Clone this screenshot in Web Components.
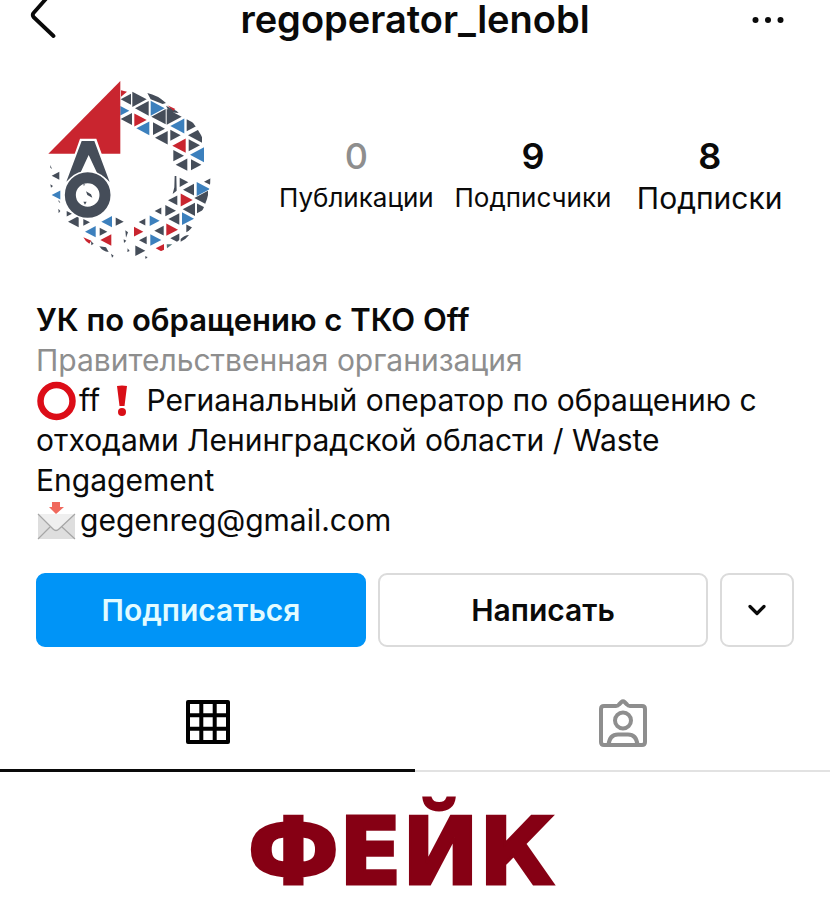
<!DOCTYPE html>
<html lang="ru">
<head>
<meta charset="utf-8">
<meta name="viewport" content="width=device-width, initial-scale=1">
<title>regoperator_lenobl</title>
<style>
  body { margin: 0; background: #fff; color: #0a0a0a; font-family: Inter, "Liberation Sans", sans-serif; }
</style>
</head>
<body>
<profile-page></profile-page>

<script>
const define = (name, html, setup) => {
  const template = document.createElement('template');
  template.innerHTML = html;
  customElements.define(name, class extends HTMLElement {
    constructor() {
      super();
      this.attachShadow({ mode: 'open' }).append(template.content.cloneNode(true));
    }
    connectedCallback() { if (setup) setup(this, this.shadowRoot); }
  });
};

define('profile-header', `
<style>
  :host { display: grid; grid-template-columns: 60px 1fr 60px; align-items: center; height: 40px; padding: 0 30px; }
  h1 { margin: 0; font-size: 38px; line-height: 38px; font-weight: 600; text-align: center; white-space: nowrap; align-self: start; }
  button { display: flex; height: 40px; padding: 0; border: 0; background: none; color: inherit; }
  .more { justify-content: flex-end; }
</style>
<button aria-label="Назад"><svg width="28" height="40" viewBox="0 0 28 40" fill="none" stroke="currentColor" stroke-width="3.8" stroke-linecap="round" stroke-linejoin="round"><path d="M22-8 3.500 13Q2 15 3.500 17L23.500 36"/></svg></button>
<h1><slot></slot></h1>
<button class="more" aria-label="Ещё"><svg width="48" height="40" viewBox="0 0 48 40" fill="currentColor"><circle cx="3.500" cy="20" r="3"/><circle cx="16" cy="20" r="3"/><circle cx="28.500" cy="20" r="3"/></svg></button>
`);

// Mosaic pieces: x of the left side, x of the right side, y, direction, colour key
const MOSAIC = [
  [274,302,103,'l','d'],[308,348,103,'r','d'],[272,296,137,'r','b'],[317,355,130,'l','d'],[363,402,130,'r','b'],
  [274,305,162,'l','d'],[314,348,165,'r','r'],[321,357,190,'l','b'],[370,403,191,'r','d'],[366,406,155,'l','d'],
  [411,453,155,'r','d'],[377,412,218,'l','d'],[422,450,211,'r','d'],[423,462,183,'l','b'],[471,502,181,'r','d'],
  [476,515,211,'l','d'],[429,466,242,'l','r'],[477,508,241,'r','d'],[482,521,269,'l','b'],[431,460,272,'r','d'],
  [439,471,299,'l','d'],[484,512,299,'r','d'],[450,473,352,'r','d'],[461,491,374,'l','d'],[501,538,372,'r','b'],
  [524,541,350,'l','d'],[416,441,406,'l','d'],[453,486,405,'r','r'],[495,533,399,'l','d'],[407,436,437,'r','d'],
  [460,494,433,'l','d'],[502,527,430,'r','d'],[376,393,438,'l','d'],[417,447,462,'l','d'],[457,490,461,'r','b'],
  [360,387,467,'r','b'],[328,345,471,'l','d'],[375,400,497,'l','d'],[410,442,494,'r','r'],[329,349,526,'l','d'],
  [313,338,500,'r','r'],[362,392,525,'r','b'],[423,447,520,'l','d'],[470,489,490,'r','d'],[317,344,557,'r','d'],
  [379,401,550,'l','r'],[116,145,470,'l','d'],[161,178,472,'r','d'],[216,245,470,'l','b'],[258,279,470,'r','d'],
  [167,196,500,'l','b'],[210,230,500,'r','d'],[213,243,525,'l','r'],[67,87,332,'l','d'],[67,90,390,'l','b'],
  [111,124,446,'r','d']
];
define('profile-avatar', `
<style>
  :host { display: block; }
  svg { display: block; }
  .d { fill: #454d59; } .b { fill: #3c80bd; } .r { fill: #c9252f; }
</style>
<svg width="200" height="210" viewBox="0 0 600 630" role="img" aria-label="Логотип">
  <clipPath id="rim"><circle cx="289" cy="328" r="253"/></clipPath>
  <g id="mosaic" clip-path="url(#rim)"></g>
  <path class="d" d="M352 84Q382 90 408 114L398 117 362 103ZM408 122 440 138 446 144 418 142ZM434 333l5 0 1 44-12 10 5-20ZM452 522q12-12 25-12-8 12-25 20ZM286 496l8 6-6 16ZM281 523l8 4-7 7ZM293 550l6 8-7 3ZM243 566l8 6-5 6ZM345 574l8 2-6 6ZM61 300l5 12-5-4ZM61 358l8 5-6 5ZM86 404l5 10-5-3ZM85 431l6 7-5 7ZM183 528l8 8-7 5ZM208 544l20 3 8 14q-18-1-28-17Z"/>
  <path class="r" d="M273 76 291 80 273 95ZM412 121 436 132 430 137ZM160 517 184 527 178 536Q166 530 160 517Z"/>
  <path d="M410 538l17 0-16 12Z" fill="#55777c"/>
  <path class="r" d="M271 48V266H55Z"/>
  <path d="M150 221H199L247 357 205 365 175 275 145 350 102 358Z" fill="#fff"/>
  <path class="d" d="M155 228H193L239 351Q218 330 203 328L176 270 150 326Q128 330 109 350Z"/>
  <circle cx="173" cy="390" r="73" fill="#fff"/>
  <circle cx="173" cy="390" r="52" fill="none" stroke="#454d59" stroke-width="33"/>
  <path class="d" d="M168 379l15 9 4 10-15-8ZM160 410l10 0-5 9ZM160 357l6 2-5 3Z"/>
</svg>
`, (host, root) => {
  const group = root.getElementById('mosaic');
  if (group.childElementCount) return;
  for (const [x1, x2, y, dir, tone] of MOSAIC) {
    const h = (x2 - x1) * 0.55 + 1;
    const [tip, base] = dir === 'l' ? [x1 - 2, x2 + 1] : [x2 + 2, x1 - 1];
    const p = document.createElementNS('http://www.w3.org/2000/svg', 'polygon');
    p.setAttribute('points', `${tip},${y} ${base},${y - h} ${base},${y + h}`);
    p.setAttribute('class', tone);
    group.append(p);
  }
});

define('profile-stat', `
<style>
  :host { display: grid; grid-template-rows: 44px 40px; justify-items: center; align-items: center; }
  .value { font-size: 36px; line-height: 44px; font-weight: 600; }
  .label { font-size: 26px; line-height: 40px; white-space: nowrap; }
  :host([muted]) .value { color: #8e8e8e; font-weight: 500; }
  :host([large]) .label { font-size: 30px; }
</style>
<span class="value"><slot name="value"></slot></span>
<span class="label"><slot></slot></span>
`);

define('profile-summary', `
<style>
  :host { display: flex; gap: 38px; padding: 25px 32px 0 30px; }
  .stats { flex: 1; display: grid; grid-template-columns: repeat(3, 1fr); align-content: start; padding-top: 69px; }
</style>
<profile-avatar></profile-avatar>
<div class="stats"><slot></slot></div>
`);

define('emoji-icon', `
<style>
  :host { display: inline-block; vertical-align: middle; margin: -8px 0; }
  svg { display: none; overflow: visible; }
  :host([name=ring]) .ring, :host([name=mark]) .mark, :host([name=mail]) .mail { display: block; }
  :host([name=mail]) { margin-right: 4px; }
  :host([name=ring]) { margin-right: 3px; }
</style>
<svg class="ring" width="40" height="40" viewBox="0 0 40 40"><circle cx="20.500" cy="18" r="16" fill="none" stroke="#dc0d18" stroke-width="6.500"/></svg>
<svg class="mark" width="38" height="40" viewBox="0 0 38 40" fill="#d90f17"><path d="M17 3Q22 2 27 3L24.500 23H19.500Z"/><circle cx="22" cy="29" r="4"/></svg>
<svg class="mail" width="40" height="40" viewBox="0 0 40 40"><path d="M2 11H39V36H2Z" fill="#dedede"/><path d="M2 11H39L23 26Q20 28 18 26Z" fill="#efefef"/><path d="M2 11 17 26Q20 29 23 26L39 11M2 36 14 24M39 36 26 24" fill="none" stroke="#a6a6a6" stroke-width="1.200"/><path d="M16 -1H24V4H28L20 11 13 4H16Z" fill="#f0695d"/></svg>
`);

define('profile-bio', `
<style>
  :host { display: block; padding: 25px 36px 0; font-size: 30px; line-height: 40px; }
  h2, p { margin: 0; font-size: inherit; line-height: inherit; }
  h2 { font-size: 31px; font-weight: 600; }
  .category { color: #8e8e8e; }
</style>
<h2><slot name="name"></slot></h2>
<p class="category"><slot name="category"></slot></p>
<slot></slot>
`);

define('action-button', `
<style>
  :host { display: block; }
  button { display: flex; align-items: center; justify-content: center; width: 100%; height: 74px; padding: 0; border: 2px solid #dbdbdb; border-radius: 9px; background: #fff; color: inherit; font: 600 30px/40px Inter, "Liberation Sans", sans-serif; }
  :host([primary]) button { border-color: #0094f7; background: #0094f7; color: #e2fbff; }
</style>
<button><slot></slot></button>
`, (host, root) => {
  if (host.hasAttribute('label')) root.querySelector('button').setAttribute('aria-label', host.getAttribute('label'));
});

define('profile-actions', `
<style>
  :host { display: grid; grid-template-columns: 1fr 1fr 74px; gap: 12px; padding: 33px 36px 0; }
  svg { display: block; }
</style>
<action-button primary>Подписаться</action-button>
<action-button>Написать</action-button>
<action-button label="Похожие аккаунты"><svg width="20" height="14" viewBox="0 0 20 14" fill="none" stroke="currentColor" stroke-width="3.200" stroke-linecap="round" stroke-linejoin="round"><path d="M3 3.500 10 10.500 17 3.500"/></svg></action-button>
`);

define('profile-tabs', `
<style>
  :host { display: grid; grid-template-columns: 1fr 1fr; margin-top: 24px; }
  button { display: flex; align-items: center; justify-content: center; box-sizing: border-box; height: 101px; padding: 4px 0 0; border: 0; border-bottom: 2px solid #e2e2e2; background: none; color: #8e8e8e; }
  button[aria-selected=true] { border-bottom: 3px solid #0a0a0a; color: #000; }
</style>
<button role="tab" aria-selected="true" aria-label="Публикации"><svg width="46" height="46" viewBox="0 0 46 46" fill="none" stroke="currentColor" stroke-width="4" stroke-linejoin="round"><path d="M3 3H43V43H3ZM16.300 3V43M29.700 3V43M3 16.300H43M3 29.700H43"/></svg></button>
<button role="tab" aria-selected="false" aria-label="Отметки"><svg width="50" height="50" viewBox="0 0 50 50" fill="none" stroke="currentColor" stroke-width="4" stroke-linejoin="round"><path d="M6 8H18Q20 8 21 6.500L23.500 4Q25 2.500 26.500 4L29 6.500Q30 8 32 8H44Q47 8 47 11V44Q47 47 44 47H6Q3 47 3 44V11Q3 8 6 8Z"/><circle cx="25" cy="22.500" r="8"/><path d="M10.500 47Q11.500 36.500 20 36.500H30Q38.500 36.500 39.500 47"/></svg></button>
`);

define('page-caption', `
<style>
  :host { display: block; padding: 21px 28px 0 0; color: #860014; text-align: center; font: 700 92px/120px "DejaVu Sans", sans-serif; -webkit-text-stroke: 3px currentColor; }
</style>
<slot></slot>
`);

define('profile-page', `
<style>:host { display: block; } </style>
<profile-header>regoperator_lenobl</profile-header>
<profile-summary>
  <profile-stat muted><span slot="value">0</span>Публикации</profile-stat>
  <profile-stat><span slot="value">9</span>Подписчики</profile-stat>
  <profile-stat large><span slot="value">8</span>Подписки</profile-stat>
</profile-summary>
<profile-bio>
  <span slot="name">УК по обращению с ТКО Off</span>
  <span slot="category">Правительственная организация</span>
  <emoji-icon name="ring"></emoji-icon>ff<emoji-icon name="mark"></emoji-icon> <span>Регианальный оператор по обращению с</span> <span>отходами Ленинградской области / Waste</span> <span>Engagement</span><br><emoji-icon name="mail"></emoji-icon>gegenreg@gmail.com
</profile-bio>
<profile-actions></profile-actions>
<profile-tabs role="tablist"></profile-tabs>
<page-caption>ФЕЙК</page-caption>
`);
</script>
</body>
</html>
